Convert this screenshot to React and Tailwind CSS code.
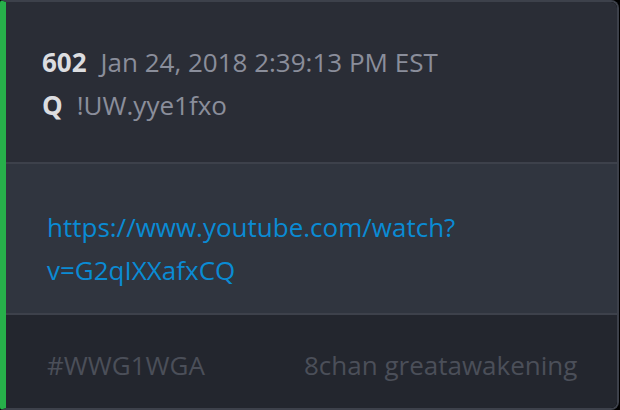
const App = () => {
  return (
    <div className="w-[620px] h-[410px] bg-black font-['Open_Sans',sans-serif]">
      <div className="w-[619px] h-[410px] flex flex-col overflow-hidden rounded-r-[8px] rounded-l-[3px] border-2 border-l-[6px] border-[#3d414b] border-l-[#27b04a]">
        <div className="h-[160px] bg-[#2a2d36] pl-[36px] pt-[39px] text-[26px] leading-[43px]">
          <div>
            <span className="font-bold text-[#dcdde0]">602</span>
            <span className="ml-[14px] text-[#8a8e9b]">Jan 24, 2018 2:39:13 PM EST</span>
          </div>
          <div>
            <span className="font-bold text-[#dcdde0]">Q</span>
            <span className="ml-[14px] text-[#8a8e9b]">!UW.yye1fxo</span>
          </div>
        </div>
        <div className="h-[153px] bg-[#30353f] border-y-2 border-[#3d414b] pl-[41px] pt-[42px] text-[26px] leading-[43px]">
          <a className="text-[#0a8bd4] break-all">https://www.youtube.com/watch?<br />v=G2qIXXafxCQ</a>
        </div>
        <div className="flex-1 bg-[#23262e] pl-[41px] pt-[29px] text-[26px] leading-[43px] text-[#4b4f59] flex">
          <span className="w-[257px]">#WWG1WGA</span>
          <span>8chan greatawakening</span>
        </div>
      </div>
    </div>
  );
};

export default App;
